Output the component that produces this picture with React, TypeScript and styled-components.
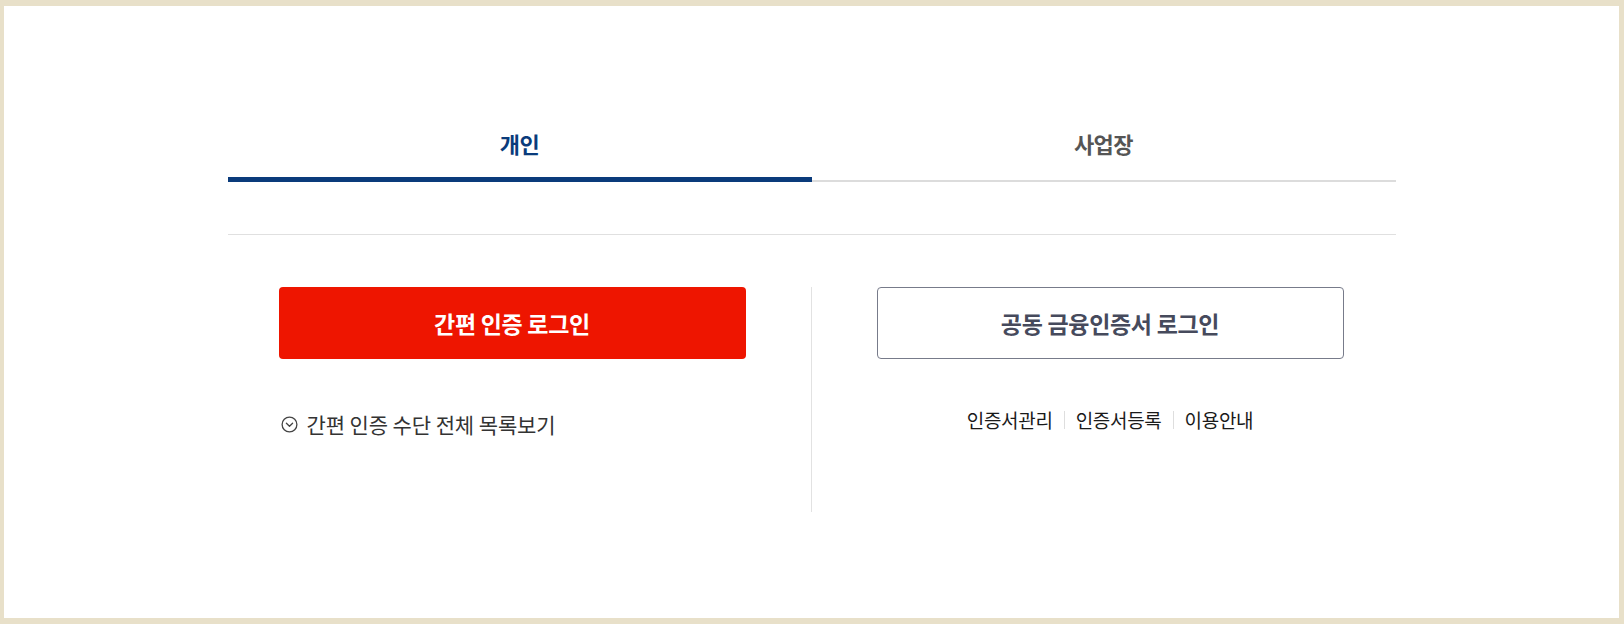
import * as React from "react";
import styled, { createGlobalStyle } from "styled-components";

const GlobalStyle = createGlobalStyle`
  html, body {
    margin: 0;
    padding: 0;
    background: #e8e0c9;
  }
  body {
    font-family: "Noto Sans CJK KR", "Noto Sans", sans-serif;
    -webkit-font-smoothing: antialiased;
  }
`;

const tabs = [
  { name: "개인", key: "person" },
  { name: "사업장", key: "biz" },
];

const links = ["인증서관리", "인증서등록", "이용안내"];

const ChevronCircle = () => (
  <svg width="17" height="17" viewBox="0 0 17 17" fill="none">
    <circle cx="8.5" cy="8.5" r="7.4" stroke="#444" strokeWidth="1.3" />
    <path d="M5.4 7.2 8.5 10.3l3.1-3.1" stroke="#444" strokeWidth="1.3" strokeLinecap="round" strokeLinejoin="round" />
  </svg>
);

export default function App() {
  const [active, setActive] = React.useState("person");

  return (
    <>
      <GlobalStyle />
      <Panel>
        <Content>
          <TabRow>
            {tabs.map(({ name, key }) => (
              <Tab key={key} data-active={key === active} onClick={() => setActive(key)}>
                {name}
              </Tab>
            ))}
          </TabRow>
          <Rule />
          <Columns>
            <Column $side="left">
              <PrimaryButton>간편 인증 로그인</PrimaryButton>
              <ListToggle>
                <ChevronCircle />
                간편 인증 수단 전체 목록보기
              </ListToggle>
            </Column>
            <Column $side="right">
              <OutlineButton>공동 금융인증서 로그인</OutlineButton>
              <Links>
                {links.map((l) => (
                  <LinkItem key={l} href="#">
                    {l}
                  </LinkItem>
                ))}
              </Links>
            </Column>
          </Columns>
        </Content>
      </Panel>
    </>
  );
}

const Panel = styled.div`
  margin: 6px 5px 6px 4px;
  height: 612px;
  background: #fff;
  box-sizing: border-box;
  padding-top: 122px;
`;

const Content = styled.div`
  width: 1168px;
  margin: 0 auto;
`;

const TabRow = styled.div`
  display: flex;
`;

const Tab = styled.div`
  flex: 1;
  height: 54px;
  box-sizing: border-box;
  padding-bottom: 24px;
  text-align: center;
  font-size: 22px;
  line-height: 30px;
  font-weight: 700;
  letter-spacing: -0.5px;
  color: #555;
  cursor: pointer;
  box-shadow: inset 0 -2px 0 #dcdcdc;

  &[data-active="true"] {
    color: #0a3b7b;
    box-shadow: inset 0 -5px 0 #0a3b7b;
  }
`;

const Rule = styled.div`
  height: 1px;
  background: #e0e0e0;
  margin-top: 52px;
`;

const Columns = styled.div`
  display: flex;
  margin-top: 52px;
`;

const Column = styled.div<{ $side: "left" | "right" }>`
  flex: 1;
  height: 225px;
  box-sizing: border-box;
  display: flex;
  flex-direction: column;
  padding: ${(p) => (p.$side === "left" ? "0 65px 0 51px" : "0 52px 0 65px")};
  border-left: ${(p) => (p.$side === "right" ? "1px solid #e2e2e2" : "none")};
`;

const PrimaryButton = styled.button`
  height: 72px;
  width: 100%;
  border: 0;
  border-radius: 4px;
  background: #ee1500;
  color: #fff;
  font-family: inherit;
  font-size: 23px;
  font-weight: 700;
  letter-spacing: -0.3px;
  cursor: pointer;
`;

const OutlineButton = styled.button`
  height: 72px;
  width: 100%;
  border: 1px solid #777b8a;
  border-radius: 4px;
  background: #fff;
  color: #464a5c;
  font-family: inherit;
  font-size: 23px;
  font-weight: 700;
  letter-spacing: -0.3px;
  cursor: pointer;
`;

const ListToggle = styled.div`
  display: flex;
  align-items: center;
  gap: 9px;
  margin-top: 51px;
  padding-left: 2px;
  font-size: 21px;
  line-height: 28px;
  letter-spacing: -0.1px;
  color: #333;
  cursor: pointer;
`;

const Links = styled.div`
  display: flex;
  justify-content: center;
  align-items: center;
  margin-top: 47px;
`;

const LinkItem = styled.a`
  font-size: 19px;
  line-height: 28px;
  font-weight: 400;
  color: #1a1a1a;
  text-decoration: none;
  letter-spacing: -0.3px;

  & + & {
    margin-left: 11px;
    padding-left: 11px;
    border-left: 1px solid #dedede;
    line-height: 18px;
  }
`;
